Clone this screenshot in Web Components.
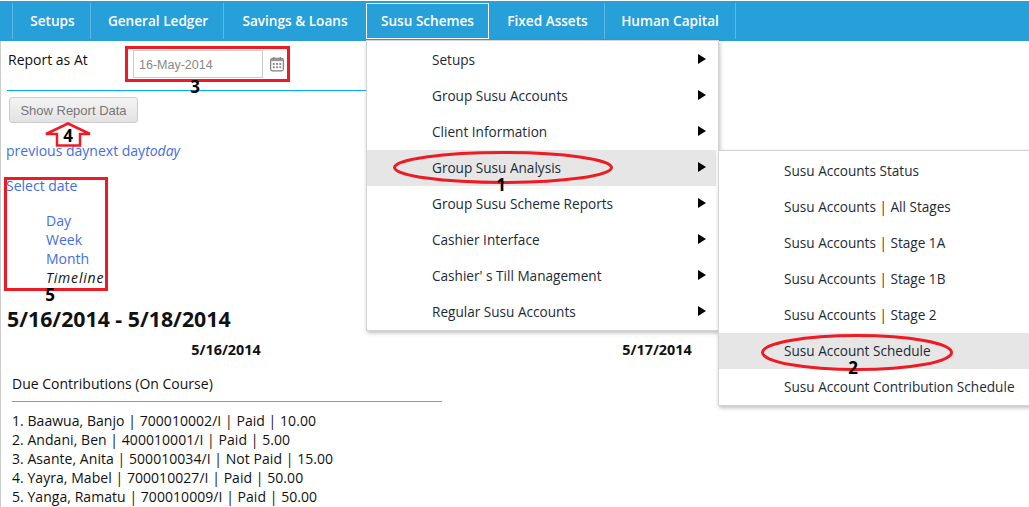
<!DOCTYPE html>
<html>
<head>
<meta charset="utf-8">
<title>Susu Schemes</title>
<style>
  html, body { margin: 0; height: 507px; overflow: hidden; background: #fff; }
  body { font: 14px/19px "Open Sans", "Noto Sans", sans-serif; color: #111; position: relative; }
</style>
</head>
<body>
<app-nav active="Susu Schemes"></app-nav>
<report-page></report-page>

<fly-menu style="left:366px;top:40px;width:353px;padding-top:1px" items="Setups|Group Susu Accounts|Client Information|Group Susu Analysis|Group Susu Scheme Reports|Cashier Interface|Cashier' s Till Management|Regular Susu Accounts" hot="3" arrows></fly-menu>
<fly-menu style="left:718px;top:150px;width:315px;padding-right:0" items="Susu Accounts Status|Susu Accounts ¦ All Stages|Susu Accounts ¦ Stage 1A|Susu Accounts ¦ Stage 1B|Susu Accounts ¦ Stage 2|Susu Account Schedule|Susu Account Contribution Schedule" hot="5"></fly-menu>

<mark-ring shape="rect" x="125" y="46" w="165" h="36" label="3" lx="195" ly="86"></mark-ring>
<mark-ring shape="arrow" x="44" y="122" w="48" h="25" label="4" lx="68" ly="135"></mark-ring>
<mark-ring shape="rect" x="4" y="177" w="104" h="114" label="5" lx="50" ly="294"></mark-ring>
<mark-ring shape="ellipse" x="393" y="151" w="220" h="33" label="1" lx="501" ly="184"></mark-ring>
<mark-ring shape="ellipse" x="761" y="334" w="192" h="37" label="2" lx="853" ly="367"></mark-ring>

<script>
const navTemplate = document.createElement('template');
navTemplate.innerHTML = `
  <style>
    :host {
      display: grid;
      grid-template-columns: 78px 133px 143px 123px 115px 132px;
      height: 40px;
      margin-top: 1px;
      padding-left: 12px;
      background: #27a0da;
      align-items: center;
    }
    .tab {
      box-sizing: border-box;
      height: 36px;
      line-height: 36px;
      padding-left: 2px;
      border-left: 1px solid #5cb8e4;
      color: #fff;
      font-size: 13.6px;
      font-weight: 600;
      text-align: center;
      white-space: nowrap;
    }
    .tab:nth-child(3) { padding-left: 0; }
    .tab.last { border-right: 1px solid #5cb8e4; padding-left: 0; }
    .tab.active {
      padding: 0;
      line-height: 34px;
      border: 1px solid #fff;
    }
    .tab.active + .tab { border-left: 0; padding-left: 2px; }
  </style>
  <div id="tabs" style="display:contents"></div>
`;

const NAV_TABS = ['Setups', 'General Ledger', 'Savings & Loans', 'Susu Schemes', 'Fixed Assets', 'Human Capital'];

class AppNav extends HTMLElement {
    constructor() {
        super();
        this.attachShadow({ mode: 'open' });
        this.shadowRoot.appendChild(navTemplate.content.cloneNode(true));
    }

    connectedCallback() {
        const holder = this.shadowRoot.getElementById('tabs');
        NAV_TABS.forEach((name, i) => {
            const tab = document.createElement('div');
            tab.className = 'tab';
            if (name === this.getAttribute('active')) tab.classList.add('active');
            if (i === NAV_TABS.length - 1) tab.classList.add('last');
            tab.textContent = name;
            holder.appendChild(tab);
        });
    }
}
customElements.define('app-nav', AppNav);

const pageTemplate = document.createElement('template');
pageTemplate.innerHTML = `
  <style>
    :host {
      display: block;
      height: 466px;
      border-left: 1px solid #cccccc;
      box-sizing: border-box;
      padding-left: 6px;
    }
    .filter {
      display: flex;
      height: 50px;
      width: 693px;
      border-bottom: 1px solid #00aeef;
      box-sizing: border-box;
      padding-top: 9px;
    }
    .filter label { width: 126px; padding-left: 1px; box-sizing: border-box; }
    .date {
      width: 130px;
      height: 28px;
      border: 1px solid #ccc;
      box-sizing: border-box;
      padding-left: 5px;
      font: 12.500px/28px "Liberation Sans", sans-serif;
      color: #888;
    }
    .cal { margin: 6px 0 0 7px; }
    button {
      display: block;
      margin: 6px 0 0 2px;
      width: 129px;
      height: 26px;
      padding: 0;
      border: 1px solid #ccc;
      border-radius: 3px;
      background: linear-gradient(#f4f4f4, #e2e2e2);
      font: 13px "Liberation Sans", sans-serif;
      color: #777;
    }
    a { color: #3f6fe0; text-decoration: none; }
    .links { margin: 18px 0 0 -1px; }
    .links i { color: #3f6fe0; }
    .views { margin: 16px 0 0 -1px; }
    .views ul { list-style: none; margin: 16px 0 0; padding: 0 0 0 40px; }
    .views i { letter-spacing: 0.8px; }
    h1 {
      margin: 17px 0 0;
      font-size: 21.3px;
      line-height: 30px;
      font-weight: 700;
    }
    .days {
      display: grid;
      grid-template-columns: 431px 431px;
      margin-top: 6px;
      text-align: center;
      font-weight: 700;
      font-size: 14.4px;
    }
    .days span { padding-left: 7px; }
    .block { margin: 15px 0 0 5px; width: 430px; }
    .block hr { border: 0; border-top: 1px solid #999; margin: 8px 0 9px; }
    ol { list-style: none; margin: 0; padding: 0; white-space: nowrap; letter-spacing: 0.05px; }
  </style>
  <div class="filter">
    <label>Report as At</label>
    <div class="date">16-May-2014</div>
    <svg class="cal" width="14" height="16" viewBox="0 0 15 16">
      <rect x="0.7" y="2" width="13.6" height="13.3" rx="2" fill="#fff" stroke="#808080" stroke-width="1.3"/>
      <rect x="1" y="2" width="13" height="3" fill="#9a9a9a"/>
      <path d="M4 0.5v3M11 0.5v3" stroke="#808080" stroke-width="1.3"/>
      <path d="M3 7h2v2H3zM6.5 7h2v2h-2zM10 7h2v2h-2zM3 10.500h2v2H3zM6.5 10.500h2v2h-2zM10 10.500h2v2h-2z" fill="#8c8c8c"/>
    </svg>
  </div>
  <button>Show Report Data</button>
  <div class="links"><a>previous day</a><a>next day</a><i>today</i></div>
  <div class="views">
    <a>Select date</a>
    <ul>
      <li><a>Day</a></li>
      <li><a>Week</a></li>
      <li><a>Month</a></li>
      <li><i>Timeline</i></li>
    </ul>
  </div>
  <h1>5/16/2014 - 5/18/2014</h1>
  <div class="days"><span>5/16/2014</span><span>5/17/2014</span></div>
  <div class="block">
    Due Contributions (On Course)
    <hr>
    <ol id="rows"></ol>
  </div>
`;

const DUE_ROWS = [
    ['1. Baawua, Banjo', '700010002/I', 'Paid', '10.00'],
    ['2. Andani, Ben', '400010001/I', 'Paid', '5.00'],
    ['3. Asante, Anita', '500010034/I', 'Not Paid', '15.00'],
    ['4. Yayra, Mabel', '700010027/I', 'Paid', '50.00'],
    ['5. Yanga, Ramatu', '700010009/I', 'Paid', '50.00']
];

class ReportPage extends HTMLElement {
    constructor() {
        super();
        this.attachShadow({ mode: 'open' });
        this.shadowRoot.appendChild(pageTemplate.content.cloneNode(true));
    }

    connectedCallback() {
        const rows = this.shadowRoot.getElementById('rows');
        DUE_ROWS.forEach((cells) => {
            const li = document.createElement('li');
            li.textContent = cells.join(' | ');
            rows.appendChild(li);
        });
    }
}
customElements.define('report-page', ReportPage);

const menuTemplate = document.createElement('template');
menuTemplate.innerHTML = `
  <style>
    :host {
      display: block;
      position: absolute;
      box-sizing: border-box;
      padding: 2px 2px 0 0;
      background: #fff;
      border: 1px solid #d4d4d4;
      box-shadow: 1px 2px 4px rgba(0, 0, 0, 0.25);
      font-size: 13.6px;
    }
    .row {
      display: flex;
      align-items: center;
      justify-content: space-between;
      box-sizing: border-box;
      height: 36px;
      padding: 0 10px 2px 65px;
      white-space: nowrap;
      color: #1c2b36;
    }
    .row.hot { background: #e6e6e6; }
    .arrow {
      width: 0;
      height: 0;
      border-left: 8px solid #000;
      border-top: 5px solid transparent;
      border-bottom: 5px solid transparent;
    }
    .pipe { color: #8a0c0c; }
  </style>
  <div id="rows"></div>
`;

class FlyMenu extends HTMLElement {
    constructor() {
        super();
        this.attachShadow({ mode: 'open' });
        this.shadowRoot.appendChild(menuTemplate.content.cloneNode(true));
    }

    connectedCallback() {
        const holder = this.shadowRoot.getElementById('rows');
        const hot = Number(this.getAttribute('hot'));
        this.getAttribute('items').split('|').forEach((name, i) => {
            const row = document.createElement('div');
            row.className = i === hot ? 'row hot' : 'row';
            const text = document.createElement('span');
            const parts = name.split('¦');
            text.textContent = parts[0];
            if (parts[1]) {
                const pipe = document.createElement('span');
                pipe.className = 'pipe';
                pipe.textContent = '|';
                text.append(pipe, parts[1]);
            }
            row.appendChild(text);
            if (this.hasAttribute('arrows')) {
                const arrow = document.createElement('span');
                arrow.className = 'arrow';
                row.appendChild(arrow);
            }
            holder.appendChild(row);
        });
    }
}
customElements.define('fly-menu', FlyMenu);

const RED = '#ed1c24';

class MarkRing extends HTMLElement {
    connectedCallback() {
        const root = this.attachShadow({ mode: 'open' });
        const [x, y, w, h] = ['x', 'y', 'w', 'h'].map((k) => Number(this.getAttribute(k)));
        const lx = Number(this.getAttribute('lx')) - x;
        const ly = Number(this.getAttribute('ly')) - y;
        let shape = '';
        const kind = this.getAttribute('shape');
        if (kind === 'rect') {
            shape = `<rect x="1.5" y="1.5" width="${w - 3}" height="${h - 3}" fill="none" stroke="${RED}" stroke-width="3"/>`;
        } else if (kind === 'ellipse') {
            shape = `<ellipse cx="${w / 2}" cy="${h / 2}" rx="${w / 2 - 1.5}" ry="${h / 2 - 1.5}" fill="none" stroke="${RED}" stroke-width="3"/>`;
        } else {
            shape = `<path d="M24 1.500 L46 12 H36 V23.500 H13 V12 H2 Z" fill="#fff" stroke="${RED}" stroke-width="2.500"/>`;
        }
        root.innerHTML = `
          <style>
            :host {
              display: block;
              position: absolute;
              left: ${x}px;
              top: ${y}px;
              width: ${w}px;
              height: ${h}px;
            }
            svg { display: block; overflow: visible; }
            b {
              position: absolute;
              left: ${lx}px;
              top: ${ly}px;
              transform: translate(-50%, -50%);
              font: 700 17px/17px "Open Sans", sans-serif;
              color: #000;
            }
          </style>
          <svg width="${w}" height="${h}">${shape}</svg>
          <b>${this.getAttribute('label')}</b>
        `;
    }
}
customElements.define('mark-ring', MarkRing);
</script>
</body>
</html>
